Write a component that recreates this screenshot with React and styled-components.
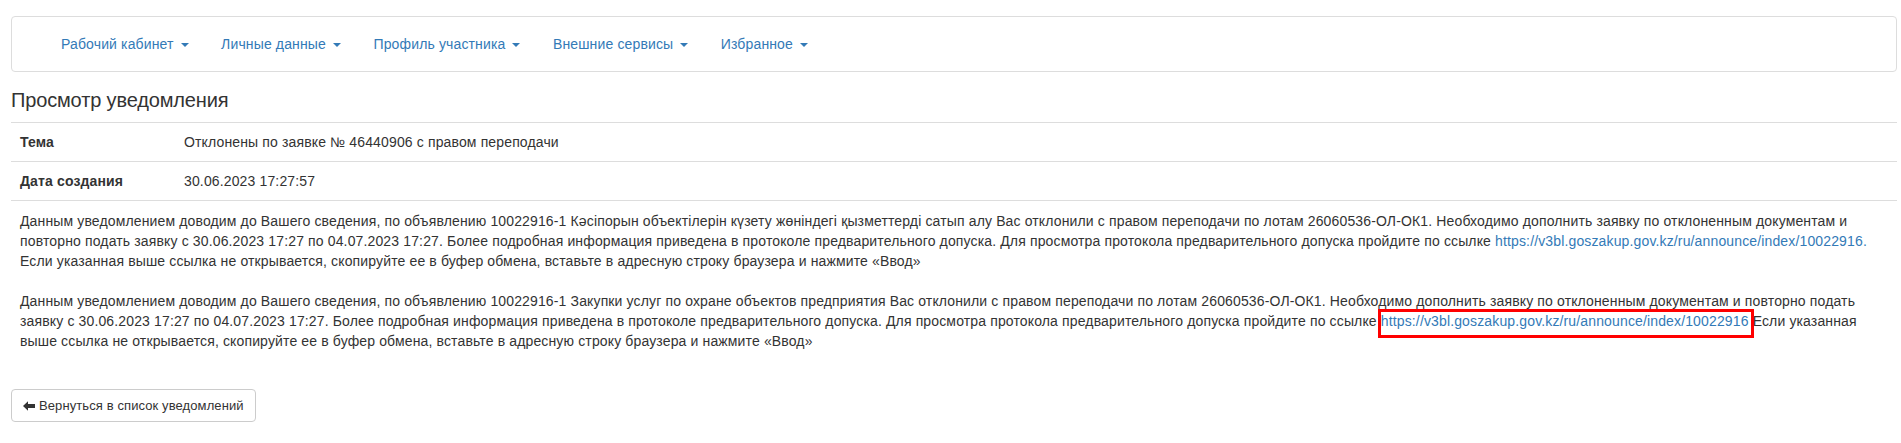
import React from "react";
import styled, { createGlobalStyle } from "styled-components";

const Global = createGlobalStyle`
  html, body { margin: 0; padding: 0; background: #fff; }
  body {
    font-family: "Liberation Sans", Arial, "DejaVu Sans", sans-serif;
    font-size: 14px;
    line-height: 20px;
    letter-spacing: 0.14px;
    color: #333;
  }
  * { box-sizing: border-box; }
`;

const Page = styled.div`
  padding: 16px 4px 0 11px;
`;

const Navbar = styled.nav`
  height: 56px;
  border: 1px solid #ddd;
  border-radius: 4px;
  background: #fff;
  display: flex;
  align-items: center;
  padding-left: 49px;
`;

const NavList = styled.ul`
  list-style: none;
  margin: 0;
  padding: 0;
  display: flex;
  align-items: center;
  gap: 32.5px;
`;

const NavItem = styled.li`
  display: flex;
  align-items: center;
  color: #337ab7;
  font-size: 14px;
  line-height: 20px;
  cursor: pointer;
`;

const Caret = styled.span`
  display: inline-block;
  width: 0;
  height: 0;
  margin-left: 7px;
  margin-top: 1px;
  border-top: 4px solid currentColor;
  border-left: 4px solid transparent;
  border-right: 4px solid transparent;
`;

const Title = styled.h4`
  margin: 17px 0 11px;
  font-size: 20px;
  line-height: 22px;
  letter-spacing: -0.15px;
  font-weight: normal;
  color: #333;
`;

const InfoTable = styled.div`
  border-top: 1px solid #ddd;
`;

const InfoRow = styled.div`
  display: grid;
  grid-template-columns: 173px 1fr;
  border-bottom: 1px solid #ddd;
`;

const Label = styled.div`
  padding: 9px 9px;
  font-weight: bold;
`;

const Value = styled.div`
  padding: 9px 9px 9px 0;
`;

const Message = styled.div`
  padding: 10px 8px 0 9px;
`;

const Paragraph = styled.p`
  margin: 0 0 20px;
  &:last-child { margin-bottom: 0; }
`;

const Link = styled.a`
  color: #337ab7;
  text-decoration: none;
`;

const Highlight = styled.span`
  position: relative;
  &::after {
    content: "";
    position: absolute;
    left: -3px;
    right: -5px;
    top: -4px;
    bottom: -9px;
    border: 3px solid #f00;
    pointer-events: none;
  }
`;

const BackButton = styled.button`
  margin-top: 38px;
  display: inline-flex;
  align-items: center;
  gap: 4px;
  height: 33px;
  padding: 0 11px;
  border: 1px solid #ccc;
  border-radius: 4px;
  background: #fff;
  color: #333;
  font-family: inherit;
  font-size: 13px;
  line-height: 19px;
  letter-spacing: 0.1px;
  cursor: pointer;
`;

const ArrowIcon = () => (
  <svg width="12" height="10" viewBox="0 0 12 10" aria-hidden="true">
    <path d="M0 5 L5 0.2 L5 3 L12 3 L12 7 L5 7 L5 9.8 Z" fill="#333" />
  </svg>
);

const navItems = [
  "Рабочий кабинет",
  "Личные данные",
  "Профиль участника",
  "Внешние сервисы",
  "Избранное",
];

const URL = "https://v3bl.goszakup.gov.kz/ru/announce/index/10022916";

export default function App() {
  return (
    <>
      <Global />
      <Page>
        <Navbar>
          <NavList>
            {navItems.map((t) => (
              <NavItem key={t}>
                {t}
                <Caret />
              </NavItem>
            ))}
          </NavList>
        </Navbar>

        <Title>Просмотр уведомления</Title>

        <InfoTable>
          <InfoRow>
            <Label>Тема</Label>
            <Value>Отклонены по заявке № 46440906 с правом переподачи</Value>
          </InfoRow>
          <InfoRow>
            <Label>Дата создания</Label>
            <Value>30.06.2023 17:27:57</Value>
          </InfoRow>
        </InfoTable>

        <Message>
          <Paragraph>
            Данным уведомлением доводим до Вашего сведения, по объявлению 10022916-1 Кәсіпорын
            объектілерін күзету жөніндегі қызметтерді сатып алу Вас отклонили с правом переподачи
            по лотам 26060536-ОЛ-ОК1. Необходимо дополнить заявку по отклоненным документам и
            повторно подать заявку с 30.06.2023 17:27 по 04.07.2023 17:27. Более подробная
            информация приведена в протоколе предварительного допуска. Для просмотра протокола
            предварительного допуска пройдите по ссылке <Link href="#">{URL}.</Link> Если указанная
            выше ссылка не открывается, скопируйте ее в буфер обмена, вставьте в адресную строку
            браузера и нажмите «Ввод»
          </Paragraph>
          <Paragraph>
            Данным уведомлением доводим до Вашего сведения, по объявлению 10022916-1 Закупки услуг
            по охране объектов предприятия Вас отклонили с правом переподачи по лотам
            26060536-ОЛ-ОК1. Необходимо дополнить заявку по отклоненным документам и повторно подать
            заявку с 30.06.2023 17:27 по 04.07.2023 17:27. Более подробная информация приведена в
            протоколе предварительного допуска. Для просмотра протокола предварительного допуска
            пройдите по ссылке{" "}
            <Highlight>
              <Link href="#">{URL}</Link>
            </Highlight>{" "}
            Если указанная выше ссылка не открывается, скопируйте ее в буфер обмена, вставьте в
            адресную строку браузера и нажмите «Ввод»
          </Paragraph>
        </Message>

        <BackButton type="button">
          <ArrowIcon />
          Вернуться в список уведомлений
        </BackButton>
      </Page>
    </>
  );
}
